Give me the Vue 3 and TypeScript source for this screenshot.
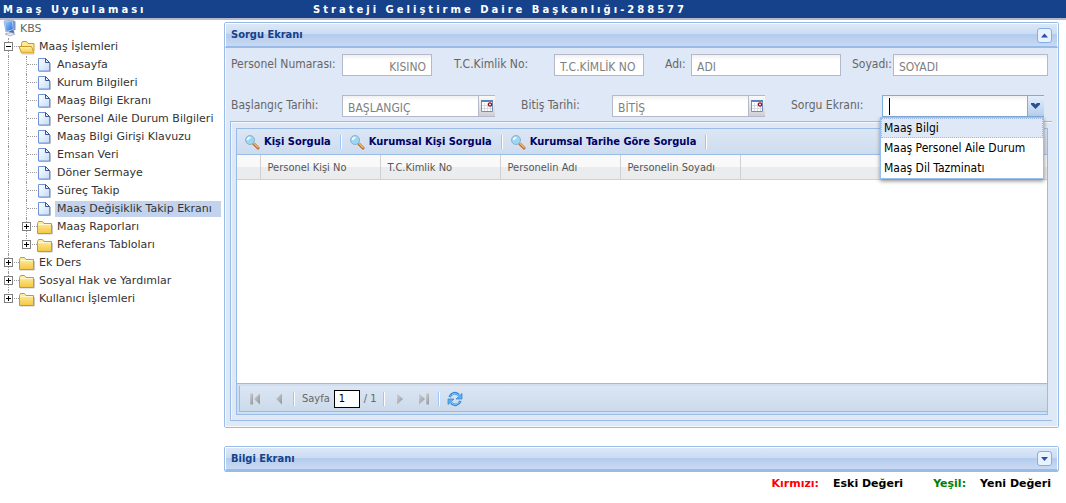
<script setup lang="ts">
import { ref } from 'vue'

interface Row { text: string; icon: 'page' | 'folder' | 'open'; depth: number; toggle?: '+' | '-'; last?: boolean; selected?: boolean }

const rows: Row[] = [
  { text: 'Maaş İşlemleri', icon: 'open', depth: 0, toggle: '-' },
  { text: 'Anasayfa', icon: 'page', depth: 1 },
  { text: 'Kurum Bilgileri', icon: 'page', depth: 1 },
  { text: 'Maaş Bilgi Ekranı', icon: 'page', depth: 1 },
  { text: 'Personel Aile Durum Bilgileri', icon: 'page', depth: 1 },
  { text: 'Maaş Bilgi Girişi Klavuzu', icon: 'page', depth: 1 },
  { text: 'Emsan Veri', icon: 'page', depth: 1 },
  { text: 'Döner Sermaye', icon: 'page', depth: 1 },
  { text: 'Süreç Takip', icon: 'page', depth: 1 },
  { text: 'Maaş Değişiklik Takip Ekranı', icon: 'page', depth: 1, selected: true },
  { text: 'Maaş Raporları', icon: 'folder', depth: 1, toggle: '+' },
  { text: 'Referans Tabloları', icon: 'folder', depth: 1, toggle: '+', last: true },
  { text: 'Ek Ders', icon: 'folder', depth: 0, toggle: '+' },
  { text: 'Sosyal Hak ve Yardımlar', icon: 'folder', depth: 0, toggle: '+' },
  { text: 'Kullanıcı İşlemleri', icon: 'folder', depth: 0, toggle: '+', last: true },
]
const actions = ['Kişi Sorgula', 'Kurumsal Kişi Sorgula', 'Kurumsal Tarihe Göre Sorgula']
const columns = ['Personel Kişi No', 'T.C.Kimlik No', 'Personelin Adı', 'Personelin Soyadı']
const options = ['Maaş Bilgi', 'Maaş Personel Aile Durum', 'Maaş Dil Tazminatı']
const screen = ref('')
const menuOpen = ref(true)
const page = ref('1')

function pick(option: string) {
  screen.value = option
  menuOpen.value = false
}
</script>

<template>
  <div class="app">
    <svg class="defs" aria-hidden="true">
      <defs>
        <linearGradient id="gPage" x1="0" y1="0" x2="1" y2="1"><stop offset="0" stop-color="#fff" /><stop offset="1" stop-color="#c3dbfb" /></linearGradient>
        <linearGradient id="gFolder" x1="0" y1="0" x2="0" y2="1"><stop offset="0" stop-color="#fff3ae" /><stop offset="1" stop-color="#f3c63f" /></linearGradient>
        <linearGradient id="gGrey" x1="0" y1="0" x2="1" y2="1"><stop offset="0" stop-color="#d2d4d8" /><stop offset="1" stop-color="#8f9296" /></linearGradient>
        <linearGradient id="gScreen" x1="0" y1="0" x2="1" y2="1"><stop offset="0" stop-color="#9fd0ff" /><stop offset="1" stop-color="#1c6be0" /></linearGradient>
      </defs>
    </svg>

    <header class="top">
      <span class="app-name">Maaş Uygulaması</span>
      <span class="unit">Strateji Geliştirme Daire Başkanlığı-288577</span>
    </header>

    <div class="layout">
      <nav class="tree" aria-label="KBS">
        <div class="row root">
          <svg width="18" height="18" viewBox="0 1 18 18">
            <path d="M3 2l9-1 1 10-8 2z" fill="#c9d3ea" stroke="#a5b2d2" />
            <path d="M4 3l7-.8.800 8-6.300 1.800z" fill="url(#gScreen)" />
            <path d="M12 1.500l2.500 1v8.500l-2 .5z" fill="#7f93c4" />
            <path d="M8 12.500l4-1.500 1.500 2.500-4 1.500z" fill="#4a67ad" />
            <path d="M4 15l6-1.500 4 1.500-5 2z" fill="#e7eaf2" stroke="#a0a8bb" stroke-width=".8" />
          </svg>
          <span class="root-text">KBS</span>
        </div>
        <div v-for="row in rows" :key="row.text" class="row">
          <span v-if="row.depth === 1" class="cell line"></span>
          <span class="cell" :class="{ line: !row.last, half: row.last, node: true }">
            <button v-if="row.toggle" class="toggle" :aria-label="row.text" :aria-expanded="row.toggle === '-'">
              <svg width="9" height="9" viewBox="0 0 9 9" shape-rendering="crispEdges">
                <path d="M.5.5h8v8h-8z" fill="#fff" stroke="#808080" />
                <path d="M2 4.500h5" stroke="#000" />
                <path v-if="row.toggle === '+'" d="M4.500 2v5" stroke="#000" />
              </svg>
            </button>
          </span>
          <svg class="icon" width="18" height="18" viewBox="2 1 18 18">
            <template v-if="row.icon === 'page'">
              <path d="M4 16.500h11.500V8" fill="none" stroke="#b9bfca" />
              <path d="M3.500 3.500h7l4 4v8.500h-11z" fill="url(#gPage)" stroke="#6f93d6" />
              <path d="M10.500 3.500v4h4z" fill="#e8f1fd" stroke="#2f56a6" />
            </template>
            <template v-else-if="row.icon === 'folder'">
              <path d="M3 17h14.500V8" fill="none" stroke="#c9c9cf" />
              <path d="M2.500 6.500l1-2h4l1.500 2h7.500v10h-14z" fill="url(#gFolder)" stroke="#c79a2b" />
              <path d="M3.500 7.500h12" stroke="#fff8cf" />
            </template>
            <template v-else>
              <path d="M4.500 14V6.500l1-2h4l1.500 2h6V14" fill="#ffeb95" stroke="#c79a2b" />
              <path d="M2 9.500h12.500l2.500 6.500H4.500z" fill="url(#gFolder)" stroke="#c79a2b" />
              <path d="M5 17h12.500" stroke="#c9c9cf" />
            </template>
          </svg>
          <a href="#" class="label" :class="{ selected: row.selected }">{{ row.text }}</a>
        </div>
      </nav>

      <main class="main">
        <section class="panel">
          <div class="panel-head">
            <h2>Sorgu Ekranı</h2>
            <button class="tool" aria-label="Sorgu Ekranı">
              <svg width="13" height="13" viewBox="0 0 13 13"><path d="M3 8.500h7L6.500 4.500z" fill="#2c50a5" /></svg>
            </button>
          </div>
          <div class="panel-body">
            <form class="form" @submit.prevent>
              <div class="fields first">
                <div class="field f-no"><label for="no">Personel Numarası:</label><input id="no" type="text" class="right" placeholder="KISINO" /></div>
                <div class="field f-tc"><label for="tc">T.C.Kimlik No:</label><input id="tc" type="text" placeholder="T.C.KİMLİK NO" /></div>
                <div class="field f-ad"><label for="ad">Adı:</label><input id="ad" type="text" placeholder="ADI" /></div>
                <div class="field f-soyad"><label for="soyad">Soyadı:</label><input id="soyad" type="text" placeholder="SOYADI" /></div>
              </div>
              <div class="fields second">
                <div class="field f-bas">
                  <label for="bas">Başlangıç Tarihi:</label><input id="bas" type="text" placeholder="BAŞLANGIÇ" />
                  <button class="trigger" aria-label="Başlangıç Tarihi">
                    <svg width="15" height="18" viewBox="0 0 15 18"><path d="M2.500 3.500h11v11h-11z" fill="#fff" stroke="#6f90c2" /><path d="M2 3h12v2H2z" fill="#5a82c0" /><path d="M5.500 6v8M8.500 6v8M11.500 6v8M3 8.500h10M3 11.500h10" stroke="#d3dbe8" /><circle cx="11" cy="7.500" r="1.600" fill="#fff" stroke="#8f0f0f" stroke-width="1.300" /></svg>
                  </button>
                </div>
                <div class="field f-bit">
                  <label for="bit">Bitiş Tarihi:</label><input id="bit" type="text" placeholder="BİTİŞ" />
                  <button class="trigger" aria-label="Bitiş Tarihi">
                    <svg width="15" height="18" viewBox="0 0 15 18"><path d="M2.500 3.500h11v11h-11z" fill="#fff" stroke="#6f90c2" /><path d="M2 3h12v2H2z" fill="#5a82c0" /><path d="M5.500 6v8M8.500 6v8M11.500 6v8M3 8.500h10M3 11.500h10" stroke="#d3dbe8" /><circle cx="11" cy="7.500" r="1.600" fill="#fff" stroke="#8f0f0f" stroke-width="1.300" /></svg>
                  </button>
                </div>
                <div class="field f-ekran">
                  <label for="ekran">Sorgu Ekranı:</label>
                  <input id="ekran" v-model="screen" type="text" role="combobox" class="active" aria-controls="ekran-list" :aria-expanded="menuOpen" />
                  <span v-if="menuOpen" class="caret"></span>
                  <button class="trigger blue" aria-label="Sorgu Ekranı" @click="menuOpen = !menuOpen">
                    <svg width="15" height="18" viewBox="0 0 15 18"><path d="M3 6h3l1.500 1.500L9 6h3v1.500L7.500 12 3 7.500z" fill="#2c4f91" /></svg>
                  </button>
                  <ul v-if="menuOpen" id="ekran-list" class="menu" role="listbox">
                    <li v-for="(option, i) in options" :key="option" role="option" :aria-selected="i === 0" :class="{ hot: i === 0 }" @click="pick(option)">{{ option }}</li>
                  </ul>
                </div>
              </div>
            </form>

            <div class="frame">
              <div class="grid">
                <div class="tbar">
                  <button v-for="action in actions" :key="action" class="action">
                    <svg width="16" height="16" viewBox="0 0 16 16"><path d="M10 10l4 4" stroke="#b5662a" stroke-width="3" stroke-linecap="round" /><path d="M10 9.500l4 4" stroke="#f7b46c" stroke-width="1.500" stroke-linecap="round" /><circle cx="6" cy="6" r="4.500" fill="#9bd6f5" stroke="#8fb0c6" /><path d="M3.500 6Q4 3.500 6.500 3.500" stroke="#fff" stroke-width="1.500" fill="none" /></svg>
                    <span>{{ action }}</span>
                  </button>
                </div>
                <div class="grid-body">
                  <table>
                    <thead>
                      <tr>
                        <th class="num"></th>
                        <th v-for="column in columns" :key="column" class="col" scope="col">{{ column }}</th>
                        <th></th>
                      </tr>
                    </thead>
                  </table>
                </div>
                <div class="bbar-wrap">
                  <div class="bbar">
                    <button class="nav" aria-label="İlk sayfa" disabled><svg width="16" height="16" viewBox="0 0 16 16"><path d="M3 2.500h3v11H3z" fill="url(#gGrey)" /><path d="M13 2.500v11L7 8z" fill="url(#gGrey)" /></svg></button>
                    <button class="nav" aria-label="Önceki sayfa" disabled><svg width="16" height="16" viewBox="0 0 16 16"><path d="M11 2.500v11L5 8z" fill="url(#gGrey)" /></svg></button>
                    <span class="sep"></span>
                    <label for="page">Sayfa</label>
                    <input id="page" v-model="page" type="text" class="page" />
                    <span>/ 1</span>
                    <span class="sep"></span>
                    <button class="nav" aria-label="Sonraki sayfa" disabled><svg width="16" height="16" viewBox="0 0 16 16"><path d="M5 2.500v11L11 8z" fill="url(#gGrey)" /></svg></button>
                    <button class="nav" aria-label="Son sayfa" disabled><svg width="16" height="16" viewBox="0 0 16 16"><path d="M10 2.500h3v11h-3z" fill="url(#gGrey)" /><path d="M3 2.500v11L9 8z" fill="url(#gGrey)" /></svg></button>
                    <span class="sep"></span>
                    <button class="nav" aria-label="Yenile"><svg width="16" height="16" viewBox="0 0 16 16"><path d="M2.500 6Q6-.5 12 4" fill="none" stroke="#2f86d8" stroke-width="2.600" /><path d="M3 5.500Q6.500.5 11.500 4" fill="none" stroke="#8fd0ff" stroke-width="1" /><path d="M15 2.500v5.500H9z" fill="#5bb0f5" stroke="#2f7fd0" stroke-width=".7" /><path d="M13.500 10Q10 16.500 4 12" fill="none" stroke="#2f86d8" stroke-width="2.600" /><path d="M13 10.500Q9.500 15.500 4.500 12" fill="none" stroke="#8fd0ff" stroke-width="1" /><path d="M1 13.500V8h6z" fill="#5bb0f5" stroke="#2f7fd0" stroke-width=".7" /></svg></button>
                  </div>
                </div>
              </div>
            </div>
          </div>
        </section>

        <section class="panel second-panel">
          <div class="panel-head">
            <h2>Bilgi Ekranı</h2>
            <button class="tool" aria-label="Bilgi Ekranı">
              <svg width="13" height="13" viewBox="0 0 13 13"><path d="M3 5h7L6.500 9z" fill="#2c50a5" /></svg>
            </button>
          </div>
        </section>

        <footer class="legend">
          <span class="red">Kırmızı:</span><span class="old">Eski Değeri</span>
          <span class="green">Yeşil:</span><span>Yeni Değeri</span>
        </footer>
      </main>
    </div>
  </div>
</template>

<style>
body { margin: 0; background: #fff; }
</style>

<style scoped>
.app { font: 11px/18px "DejaVu Sans", Verdana, sans-serif; color: #222; }
.app * { box-sizing: border-box; }
.defs { position: absolute; width: 0; height: 0; }
button { padding: 0; border: 0; background: none; font: inherit; color: inherit; cursor: pointer; }
svg { display: block; flex: none; }

.top { display: flex; height: 20px; padding-left: 3px; background: #15428b; border-bottom: 2px solid #b5b8c8; color: #fff; font-size: 10px; font-weight: bold; letter-spacing: 3px; line-height: 20px; white-space: nowrap; }
.app-name { width: 310px; flex: none; }

.layout { display: flex; align-items: flex-start; }
.tree { flex: none; width: 224px; color: #333; }
.row { display: flex; height: 18px; padding-left: 1px; white-space: nowrap; }
.root-text { color: #666; padding-left: 1px; }
.cell { position: relative; flex: none; width: 18px; height: 18px; }
.line::before, .half::before { content: ""; position: absolute; left: 7px; top: 0; height: 18px; border-left: 1px dotted #999; }
.half::before { height: 9px; }
.node::after { content: ""; position: absolute; left: 8px; top: 8px; width: 10px; border-top: 1px dotted #999; }
.toggle { position: relative; z-index: 1; display: block; margin: 4px 0 0 3px; }
.label { height: 16px; margin-top: 1px; padding: 0 3px 0 2px; line-height: 16px; color: #333; text-decoration: none; }
.label.selected { background: #c3d3ed; padding-right: 9px; }

.main { flex: 1; min-width: 0; padding: 2px 7px 0 0; font-family: "DejaVu Sans Condensed", Tahoma, sans-serif; }
.panel { border: 1px solid #99bbe8; border-radius: 2px; }
.panel-head { display: flex; align-items: center; justify-content: space-between; height: 25px; padding: 0 5px; border: 1px solid #fff; border-bottom: 2px solid #99bbe8; background: linear-gradient(#dce8f6, #cbdcf3 46%, #b3cbee 47%, #c9daf2); }
.panel-head h2 { margin: 0; font-size: 11px; line-height: 18px; color: #15428b; }
.tool { width: 15px; height: 15px; border: 1px solid #84aee3; border-radius: 3px; background: #e9f3ff; display: flex; align-items: center; justify-content: center; }
.panel-body { padding: 6px 5px 5px 4px; background: #dfe8f6; border: 1px solid #f4f8fd; border-top: 0; }
.form { color: #666; font-size: 12px; }
.fields { display: grid; padding: 0 4px 0 1px; }
.first { grid-template-columns: 223fr 211fr 187fr 196fr; margin-bottom: 19px; }
.second { grid-template-columns: 290fr 270fr 257fr; }
.field { position: relative; display: flex; min-width: 0; }
.field label { flex: none; line-height: 20px; white-space: nowrap; }
.f-no { padding-right: 22px; }
.f-tc { padding-right: 21px; }
.f-ad { padding-right: 11px; }
.f-bas, .f-bit { padding-right: 26px; }
.f-ekran { padding-right: 4px; }
.f-no label, .f-bas label { width: 111px; }
.f-tc label { width: 100px; }
.f-ad label { width: 26px; }
.f-soyad label { width: 41px; }
.f-bit label, .f-ekran label { width: 91px; }
.field input { flex: 1; min-width: 0; height: 22px; padding: 3px 5px 0; border: 1px solid #b5b8c8; border-radius: 0; background: linear-gradient(#f0f0f0, #fff 5px); font: inherit; color: #000; outline: 0; }
.field input::placeholder { color: #808080; opacity: 1; }
.field input.right { text-align: right; }
.field input.active { border-color: #7eadd9; }
.caret { position: absolute; left: 98px; top: 3px; width: 1px; height: 17px; background: #000; }
.trigger { flex: none; width: 16px; height: 22px; border-top: 1px solid #b5b8c8; border-bottom: 1px solid #b5b8c8; background: linear-gradient(#fafafa, #cfd0d3); }
.trigger.blue { border-color: #7eadd9; background: linear-gradient(#e3eefb, #b5cdec); }
.menu { position: absolute; z-index: 5; left: 89px; right: 4px; top: 22px; margin: 0; padding: 0; list-style: none; border: 1px solid #98c0f4; background: #fff; color: #000; box-shadow: 0 2px 4px #888; line-height: 18px; }
.menu li { padding: 0 2px; border: 1px solid #fff; white-space: nowrap; }
.menu li.hot { border: 1px dotted #a3bae9; background: #dfe8f6; }

.frame { margin-top: 4px; padding: 6px 4px 5px 5px; border: 1px solid #99bbe8; border-right: 0; box-shadow: inset 1px 1px #f4f8fd; }
.grid { border: 1px solid #99bbe8; background: #d0def0; }
.tbar { display: flex; align-items: center; height: 26px; padding-left: 7px; border-bottom: 1px solid #99bbe8; background: linear-gradient(#dce7f5, #cddcef); }
.action { display: flex; align-items: center; gap: 4px; height: 18px; font-weight: bold; color: #000066; white-space: nowrap; }
.action::after { content: ""; width: 2px; height: 14px; margin: 0 7px 0 5px; background: linear-gradient(90deg, #98c8ff 50%, #fff 50%); }
.grid-body { min-height: 228px; background: #fff; }
table { width: 100%; border-collapse: collapse; table-layout: fixed; }
th { height: 24px; padding: 3px 7px 0; border-right: 1px solid #d0d0d0; border-bottom: 1px solid #d0d0d0; background: linear-gradient(#f9f9f9 50%, #ebecee 50%); font-weight: normal; text-align: left; color: #555; white-space: nowrap; }
th:last-child { border-right: 0; }
.num { width: 23px; }
.col { width: 120px; }
.bbar-wrap { padding: 2px 0 2px 2px; border-top: 1px solid #99bbe8; }
.bbar { display: flex; align-items: center; height: 26px; padding-left: 7px; border-left: 1px solid #99bbe8; border-bottom: 1px solid #99bbe8; background: linear-gradient(#dce6f4, #cbdaeb); color: #666; }
.nav + .nav { margin-left: 8px; }
.sep { width: 2px; height: 14px; margin: 0 7px 0 6px; background: linear-gradient(90deg, #98c8ff 50%, #fff 50%); }
.page { width: 26px; height: 18px; margin: 0 4px; padding: 0 4px; border: 1px solid #000; border-radius: 0; background: #fff; font: inherit; color: #000; }

.second-panel { margin-top: 18px; }
.second-panel .panel-head { height: 24px; }
.legend { display: flex; justify-content: flex-end; gap: 14px; padding: 3px 8px 0 0; font: bold 11px/18px "DejaVu Sans", Verdana, sans-serif; color: #000; }
.old { margin-right: 16px; }
.red { color: #f00; }
.green { color: #008000; }
</style>
